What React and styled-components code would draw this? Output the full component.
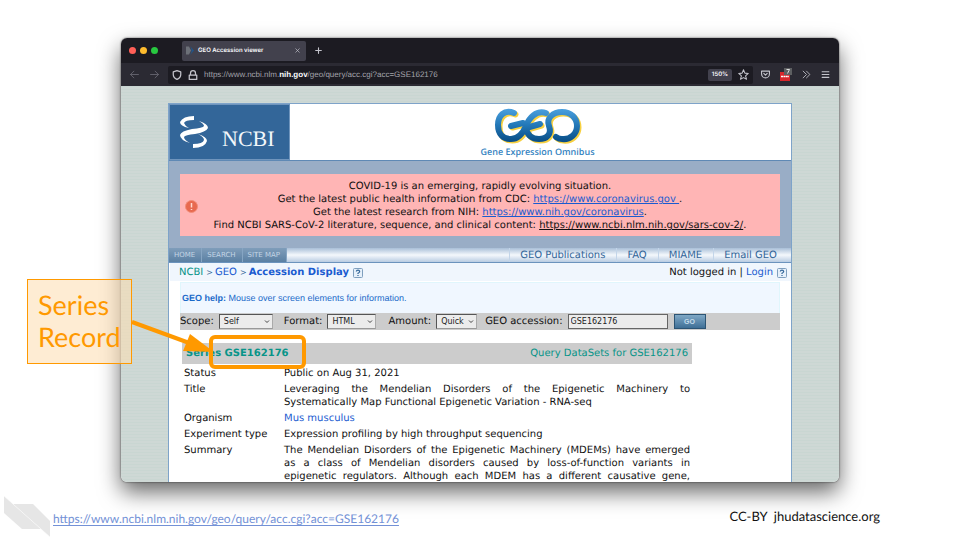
import React from "react";
import styled, { createGlobalStyle, css } from "styled-components";

const verdana = '"DejaVu Sans", Verdana, sans-serif';
const arial = '"Liberation Sans", Arial, sans-serif';
const lato = 'Lato, Carlito, sans-serif';
const inter = 'Inter, "Open Sans", sans-serif';

const GlobalStyle = createGlobalStyle`
  *, *::before, *::after { box-sizing: border-box; }
  body { margin: 0; background: #fff; overflow: hidden; text-rendering: geometricPrecision; }
  button, input, select { font: inherit; margin: 0; }
`;

/* ---------- slide ---------- */

const Slide = styled.div`
  position: relative;
  display: flex;
  flex-direction: column;
  height: 100vh;
  overflow: hidden;
  background: #fff;
`;

const Window = styled.main`
  flex: 1;
  min-height: 0;
  display: flex;
  flex-direction: column;
  margin: 38px 121px 0;
  border-radius: 6px;
  overflow: hidden;
  box-shadow: 0 0 2px rgba(0, 0, 0, 0.7), 0 10px 22px rgba(0, 0, 0, 0.6);
`;

const Footer = styled.footer`
  display: flex;
  justify-content: space-between;
  align-items: flex-start;
  height: 58px;
  padding: 14px 80px 0 4px;
  font-family: ${lato};
  color: #111;
`;

const Source = styled.div`
  display: flex;
  align-items: flex-start;
  gap: 3px;
`;

const SourceLink = styled.a`
  margin-top: 15px;
  font-size: 12px;
  line-height: 16px;
  color: #7391d6;
  text-underline-offset: 2px;
`;

const Credit = styled.span`
  margin-top: 12px;
  font-size: 13px;
  line-height: 16px;
  white-space: pre;
`;

const Callout = styled.aside`
  position: absolute;
  left: 27px;
  top: 279px;
  width: 105px;
  height: 85px;
  padding: 9px 0 0 10px;
  border: 1px solid #ff9900;
  background: rgba(253, 222, 180, 0.58);
  color: #ff9900;
  font: 27px/32px ${lato};
`;

const Arrow = styled.svg`
  position: absolute;
  left: 130px;
  top: 316px;
`;

const Highlight = styled.div`
  position: absolute;
  left: 209px;
  top: 335px;
  width: 97px;
  height: 34px;
  border: 4px solid #ff9900;
  border-radius: 6px;
`;

/* ---------- browser chrome ---------- */

const TabStrip = styled.div`
  display: flex;
  align-items: center;
  height: 25px;
  flex: none;
  padding: 0 8px;
  background: #1c1b22;
`;

const Lights = styled.div`
  display: flex;
  gap: 4px;
  width: 53px;
`;

const Light = styled.span`
  width: 7px;
  height: 7px;
  border-radius: 50%;
  background: ${(p) => p.$color};
`;

const Tab = styled.div`
  display: flex;
  align-items: center;
  gap: 4px;
  width: 124px;
  height: 20px;
  padding: 0 5px 0 4px;
  border-radius: 2px;
  background: #42414d;
  color: #fbfbfe;
  font: 600 6px/10px ${inter};
`;

const TabTitle = styled.span`
  flex: 1;
  white-space: nowrap;
`;

const IconButton = styled.button`
  display: flex;
  align-items: center;
  justify-content: center;
  padding: 0;
  border: 0;
  background: none;
  color: ${(p) => (p.$dim ? "#6b6a74" : "#c4c4cc")};
`;

const NewTab = styled(IconButton)`
  margin-left: 8px;
`;

const Toolbar = styled.div`
  display: flex;
  align-items: center;
  flex: none;
  height: 23px;
  padding: 0 9px;
  background: #2b2a33;
`;

const History = styled.div`
  display: flex;
  gap: 11px;
  width: 38px;
`;

const UrlBar = styled.div`
  flex: 1;
  display: flex;
  align-items: center;
  height: 18px;
  padding: 0 4px;
  border-radius: 2px;
  background: #1c1b22;
  gap: 6px;
`;

const Url = styled.span`
  flex: 1;
  color: #a3a3ab;
  font: 8px/12px ${arial};
  white-space: nowrap;
  b { color: #fbfbfe; }
`;

const Zoom = styled.span`
  width: 24px;
  height: 12px;
  border-radius: 2px;
  background: #42414d;
  color: #fbfbfe;
  font: 600 6px/12px ${inter};
  text-align: center;
`;

const Tools = styled.div`
  display: flex;
  align-items: center;
  gap: 10px;
  padding-left: 8px;
`;

/* ---------- web page ---------- */

const Page = styled.div`
  flex: 1;
  min-height: 0;
  overflow: hidden;
  padding: 17px 47px 0;
  background: repeating-linear-gradient(#c9d6d2 0 1px, #ced8d5 1px 3px);
  font: 10px/13px ${verdana};
  color: #111;
`;

const Sheet = styled.div`
  min-height: 100%;
  border: 1px solid #7ea3c9;
  border-bottom: 0;
  background: #fff;
`;

const Masthead = styled.header`
  display: flex;
  height: 57px;
  border-bottom: 1px solid #5f89b5;
`;

const NcbiLogo = styled.a`
  display: flex;
  align-items: center;
  width: 121px;
  padding-left: 10px;
  gap: 13px;
  border: 1px solid #7095bd;
  background: #336699;
  color: #f2f6fa;
  font: 22px/24px "Liberation Serif", serif;
  text-decoration: none;
`;

const NcbiName = styled.span`
  padding-top: 13px;
`;

const GeoLogo = styled.div`
  flex: 1;
  display: flex;
  flex-direction: column;
  align-items: center;
  padding: 3px 6px 0 0;
  color: #3583bf;
  font: 600 9px/13px "Open Sans", sans-serif;
`;

const NoticeArea = styled.section`
  padding: 13px 11px 12px;
  background: #99adc6;
`;

const Notice = styled.div`
  display: grid;
  grid-template-columns: 20px 1fr 20px;
  align-items: center;
  padding: 6px 0 4px;
  background: #ffb5b5;
  text-align: center;
  white-space: nowrap;
  svg { margin-left: 5px; }
  p { margin: 0; }
`;

const Link = styled.a`
  color: ${(p) => p.$color || "#1a5bd0"};
  text-decoration: ${(p) => (p.$underline ? "underline" : "none")};
  font-weight: ${(p) => (p.$bold ? "bold" : "normal")};
`;

const NavBar = styled.nav`
  display: flex;
  justify-content: space-between;
  height: 15px;
  border-bottom: 1px solid #6b93bd;
  background: linear-gradient(#a9bfd8, #f4f8fc 50%, #b9cce2);
`;

const NavGroup = styled.div`
  display: flex;
`;

const SiteLink = styled.a`
  padding: 0 6px 0 5px;
  border-right: 1px solid #86a5c3;
  background: linear-gradient(#7f9dba, #5b80a3);
  color: #c3d5e5;
  font: 7px/14px "DejaVu Sans", sans-serif;
  text-decoration: none;
`;

const GeoLink = styled.a`
  padding: 0 11px 0 10px;
  border-left: 1px solid #c3d5e9;
  color: #336699;
  line-height: 16px;
  text-decoration: none;
  &:last-child { padding-right: 14px; }
`;

const CrumbRow = styled.div`
  display: flex;
  justify-content: space-between;
  padding: 3px 4px 2px 9px;
  margin: 0 0 1px 1px;
  background: #f0f6fd;
`;

const Inline = styled.span`
  display: flex;
  align-items: center;
  gap: ${(p) => p.$gap}px;
  white-space: pre;
`;

const Crumb = styled(Link)`
  & + &::before {
    content: ">";
    padding: 0 2px 0 3px;
    color: #336699;
    font-size: 8px;
    font-weight: normal;
  }
`;

const Help = styled.div`
  margin: 0 11px;
  padding: 8px 1px;
  border: 1px solid #e0f6fc;
  border-bottom: 0;
  background: #f0f7ff;
  color: #1a6ac9;
  font: 9px/14px ${arial};
`;

const QueryForm = styled.form`
  display: flex;
  align-items: center;
  height: 17px;
  margin: 0 11px;
  background: #cccccc;
`;

const Field = styled.label`
  display: flex;
  align-items: center;
  gap: 5px;
  margin-right: ${(p) => p.$after}px;
  white-space: nowrap;
`;

const control = css`
  height: 15px;
  border: 1px solid;
  border-color: #555 #aaa #999 #555;
  border-radius: 0;
  background: #ececec;
  color: #222;
  font: 8px/12px ${verdana};
`;

const SelectBox = styled.span`
  position: relative;
  display: flex;
  width: ${(p) => p.$width}px;
  svg { position: absolute; right: 3px; top: 5px; }
`;

const Select = styled.select`
  ${control}
  width: 100%;
  padding: 0 0 0 4px;
  appearance: none;
`;

const TextInput = styled.input`
  ${control}
  width: 100px;
  padding: 0 2px;
  border-color: #666;
`;

const Go = styled.button`
  width: 32px;
  height: 15px;
  padding: 0;
  border: 1px solid #2c5474;
  background: linear-gradient(#7fa8c6, #3f6f96);
  color: #c5dbea;
  font: bold 7px/12px ${arial};
`;

const Record = styled.section`
  width: 82%;
  margin: 13px 0 0 13px;
`;

const RecordHead = styled.div`
  display: flex;
  justify-content: space-between;
  padding: 4px;
  background: #cccccc;
`;

const Details = styled.table`
  width: 100%;
  border-spacing: 0;
  th, td { padding: 3px 2px 0; vertical-align: top; font-weight: normal; text-align: left; }
  th { width: 100px; white-space: nowrap; }
  th + td { text-align: justify; }
`;

const Abstract = styled.div`
  text-align-last: justify;
`;

/* ---------- drawings ---------- */

const Stroke = ({ size, box = 16, width = 1.5, children }) => (
  <svg width={size} height={size} viewBox={`0 0 ${box} ${box}`} fill="none" stroke="currentColor"
    strokeWidth={width} strokeLinecap="round" strokeLinejoin="round" aria-hidden="true">
    {children}
  </svg>
);

const Favicon = () => (
  <svg width="8" height="9" viewBox="0 0 8 9" aria-hidden="true">
    <path d="M0 .5h3l2 4-2 4H0z" fill="#6c7078" />
    <path d="M4 0l4 4.500-4 4.500q3-4.500 0-9z" fill="#20558a" />
  </svg>
);

const Helix = () => (
  <svg width="29" height="33" viewBox="0 0 29 33" aria-hidden="true">
    <g fill="#fff">
      <path d="M14 0V4Q5 4 4 7Q5 10 9 12Q0 10 0 6Q3 0 14 0Z" />
      <path d="M19 5Q28 8 28 12Q26 16 15 18Q5 19 4 21Q4 24 10 27Q0 24 0 19Q1 15 12 13Q23 12 24 10Q24 8 19 5Z" />
      <path d="M18 18Q27 21 27 25Q25 32 13 32V28Q23 28 24 24Q24 21 18 18Z" />
    </g>
  </svg>
);

const geoShape = (
  <>
    <path d="M20 6C10 2 4 9 4 18C4 27 9 32 17 32C25 32 29 26 32 19C35 11 42 3 52 6" />
    <path d="M17 19L29 16M32 21L46 17" />
    <path d="M32 21C33 28 38 32 45 32C53 32 58 27 55 19C52 11 59 5 68 5C77 5 83 11 83 19C83 27 76 33 68 32Q65 32 62 30" />
  </>
);

const GeoMark = () => (
  <svg width="88" height="38" viewBox="0 0 88 38" fill="none" strokeLinecap="round"
    strokeLinejoin="round" strokeWidth="6" role="img" aria-label="GEO">
    <defs>
      <linearGradient id="geoBlue" gradientUnits="userSpaceOnUse" x1="0" y1="2" x2="0" y2="34">
        <stop offset="0" stopColor="#4a9fdd" />
        <stop offset="0.5" stopColor="#2378b8" />
        <stop offset="1" stopColor="#0a4f88" />
      </linearGradient>
    </defs>
    <g stroke="#f7d040" transform="translate(1.500 1.500)">{geoShape}</g>
    <g stroke="url(#geoBlue)">{geoShape}</g>
  </svg>
);

const Warning = () => (
  <svg width="13" height="13" viewBox="0 0 13 13" aria-hidden="true">
    <circle cx="6.500" cy="6.500" r="6" fill="#e8694f" stroke="#f08d78" />
    <path d="M6.500 3v4.500M6.500 9v1" stroke="#ffd9d0" strokeWidth="1.500" />
  </svg>
);

const QuestionMark = () => (
  <svg width="10" height="10" viewBox="0 0 10 10" fill="none" stroke="#336699" aria-hidden="true">
    <rect x=".5" y=".5" width="9" height="9" rx="1" fill="#e6f0fa" stroke="#7f9fbe" />
    <path d="M3.300 3.500Q3.500 2.200 5 2.200T6.700 3.600Q6.500 4.500 5 5.300V6M5 7v1" strokeWidth="1.200" />
  </svg>
);

const Chevron = () => (
  <svg width="6" height="5" viewBox="0 0 6 5" fill="none" stroke="#444" aria-hidden="true">
    <path d="M1 1.500L3 3.500L5 1.500" />
  </svg>
);

const Blocker = () => (
  <svg width="12" height="14" viewBox="0 0 12 14" aria-hidden="true">
    <path d="M0 4h10v9H0z" fill="#d7262b" />
    <path d="M1 8.500h8" stroke="#fff" strokeWidth="1.500" strokeDasharray="2 .4" />
    <path d="M4 0h8v7H4z" fill="#5d5f61" />
    <path d="M6.500 1.500h3L7.500 5.500" stroke="#ddd" fill="none" />
  </svg>
);

const Ribbon = () => (
  <svg width="46" height="42" viewBox="0 0 46 42" fill="#e6e6e6" aria-hidden="true">
    <path d="M0 0L37 33H18L0 17Z" />
    <path d="M9 8H29L46 25V41Z" />
    <path d="M0 0L46 41" stroke="#fff" strokeWidth=".5" />
  </svg>
);

/* ---------- content ---------- */

const Dropdown = ({ label, value, width, after }) => (
  <Field $after={after}>
    {label}
    <SelectBox $width={width}>
      <Select defaultValue={value}><option>{value}</option></Select>
      <Chevron />
    </SelectBox>
  </Field>
);

const siteLinks = ["HOME", "SEARCH", "SITE MAP"];
const geoLinks = ["GEO Publications", "FAQ", "MIAME", "Email GEO"];

const details = [
  ["Status", "Public on Aug 31, 2021"],
  ["Title", "Leveraging the Mendelian Disorders of the Epigenetic Machinery to Systematically Map Functional Epigenetic Variation - RNA-seq"],
  ["Organism", <Link href="#organism">Mus musculus</Link>],
  ["Experiment type", "Expression profiling by high throughput sequencing"],
  ["Summary", (
    <Abstract>
      The Mendelian Disorders of the Epigenetic Machinery (MDEMs) have emerged<br />
      as a class of Mendelian disorders caused by loss-of-function variants in<br />
      epigenetic regulators. Although each MDEM has a different causative gene,
    </Abstract>
  )],
];

const Chrome = () => (
  <>
    <TabStrip>
      <Lights>
        <Light $color="#ff5f57" /><Light $color="#febc2e" /><Light $color="#28c840" />
      </Lights>
      <Tab>
        <Favicon />
        <TabTitle>GEO Accession viewer</TabTitle>
        <IconButton aria-label="Close tab"><Stroke size={7}><path d="M4 4l8 8M12 4L4 12" /></Stroke></IconButton>
      </Tab>
      <NewTab aria-label="New tab"><Stroke size={9} width={2}><path d="M8 3v10M3 8h10" /></Stroke></NewTab>
    </TabStrip>
    <Toolbar>
      <History>
        <IconButton $dim aria-label="Back"><Stroke size={9}><path d="M15 8H1M7 2L1 8l6 6" /></Stroke></IconButton>
        <IconButton $dim aria-label="Forward"><Stroke size={9}><path d="M1 8h14M9 2l6 6-6 6" /></Stroke></IconButton>
      </History>
      <UrlBar>
        <IconButton aria-label="Protection"><Stroke size={10} width={2}><path d="M8 1l6 2v4q0 5-6 8Q2 12 2 7V3z" /></Stroke></IconButton>
        <IconButton aria-label="Connection"><Stroke size={10} width={2}><path d="M2 8h12v7H2zM4 8V5a4 4 0 0 1 8 0v3" /></Stroke></IconButton>
        <Url>https://www.ncbi.nlm.<b>nih.gov</b>/geo/query/acc.cgi?acc=GSE162176</Url>
        <Zoom>150%</Zoom>
        <IconButton aria-label="Bookmark"><Stroke size={11}><path d="M8 1l2 5 5 .5-4 3.500 1.500 5L8 12.500 3.500 15 5 10 1 6.500 6 6z" /></Stroke></IconButton>
      </UrlBar>
      <Tools>
        <IconButton aria-label="Pocket"><Stroke size={9} width={2}><path d="M1 2h14v5a7 7 0 0 1-14 0zM5 6l3 3 3-3" /></Stroke></IconButton>
        <IconButton aria-label="Blocker"><Blocker /></IconButton>
        <IconButton aria-label="More tools"><Stroke size={9}><path d="M2 2l6 6-6 6M8 2l6 6-6 6" /></Stroke></IconButton>
        <IconButton aria-label="Menu"><Stroke size={9} width={2}><path d="M2 3h12M2 8h12M2 13h12" /></Stroke></IconButton>
      </Tools>
    </Toolbar>
  </>
);

export default function App() {
  return (
    <Slide>
      <GlobalStyle />
      <Window>
        <Chrome />
        <Page>
          <Sheet>
            <Masthead>
              <NcbiLogo href="#ncbi"><Helix /><NcbiName>NCBI</NcbiName></NcbiLogo>
              <GeoLogo><GeoMark />Gene Expression Omnibus</GeoLogo>
            </Masthead>
            <NoticeArea>
              <Notice>
                <Warning />
                <div>
                  <p>COVID-19 is an emerging, rapidly evolving situation.</p>
                  <p>Get the latest public health information from CDC: <Link $underline href="#cdc">https://www.coronavirus.gov&nbsp;</Link>.</p>
                  <p>Get the latest research from NIH: <Link $underline href="#nih">https://www.nih.gov/coronavirus</Link>.</p>
                  <p>Find NCBI SARS-CoV-2 literature, sequence, and clinical content: <Link $underline $color="#111" href="#sars">https://www.ncbi.nlm.nih.gov/sars-cov-2/</Link>.</p>
                </div>
              </Notice>
            </NoticeArea>
            <NavBar>
              <NavGroup>{siteLinks.map((t) => <SiteLink key={t} href="#site">{t}</SiteLink>)}</NavGroup>
              <NavGroup>{geoLinks.map((t) => <GeoLink key={t} href="#geo">{t}</GeoLink>)}</NavGroup>
            </NavBar>
            <CrumbRow>
              <Inline $gap={0}>
                <Crumb $color="#089488" href="#ncbi">NCBI</Crumb>
                <Crumb href="#geo">GEO</Crumb>
                <Crumb $bold href="#acc">Accession Display </Crumb>
                <QuestionMark />
              </Inline>
              <Inline $gap={4}><span>Not logged in | <Link href="#login">Login</Link></span><QuestionMark /></Inline>
            </CrumbRow>
            <Help><b>GEO help:</b> Mouse over screen elements for information.</Help>
            <QueryForm onSubmit={(e) => e.preventDefault()}>
              <Dropdown label="Scope:" value="Self" width={54} after={11} />
              <Dropdown label="Format:" value="HTML" width={49} after={12} />
              <Dropdown label="Amount:" value="Quick" width={41} after={8} />
              <Field $after={6}>GEO accession:<TextInput defaultValue="GSE162176" /></Field>
              <Go type="submit">GO</Go>
            </QueryForm>
            <Record>
              <RecordHead>
                <Link $bold $color="#089488" href="#series">Series GSE162176</Link>
                <Link $color="#089488" href="#datasets">Query DataSets for GSE162176</Link>
              </RecordHead>
              <Details>
                <tbody>
                  {details.map(([name, value]) => (
                    <tr key={name}><th scope="row">{name}</th><td>{value}</td></tr>
                  ))}
                </tbody>
              </Details>
            </Record>
          </Sheet>
        </Page>
      </Window>
      <Footer>
        <Source>
          <Ribbon />
          <SourceLink href="#source">https://www.ncbi.nlm.nih.gov/geo/query/acc.cgi?acc=GSE162176</SourceLink>
        </Source>
        <Credit>CC-BY  jhudatascience.org</Credit>
      </Footer>
      <Callout>Series Record</Callout>
      <Highlight />
      <Arrow width="86" height="40" viewBox="0 0 86 40" aria-hidden="true">
        <path d="M2 6L62 28" stroke="#ff9900" strokeWidth="4" />
        <path d="M60 18L84 36L53 35Z" fill="#ff9900" />
      </Arrow>
    </Slide>
  );
}
